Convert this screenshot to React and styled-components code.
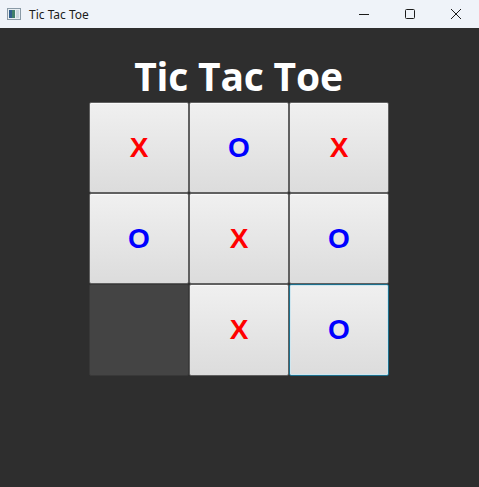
import React from 'react'
import styled, { createGlobalStyle } from 'styled-components'

const GlobalStyle = createGlobalStyle`
  html, body {
    margin: 0;
    padding: 0;
    background: #2e2e2e;
  }
  #root {
    width: 479px;
    height: 487px;
  }
`

const Window = styled.div`
  width: 479px;
  height: 487px;
  display: flex;
  flex-direction: column;
  background: #2e2e2e;
  overflow: hidden;
`

const TitleBar = styled.div`
  height: 28px;
  flex: none;
  display: flex;
  align-items: center;
  background: #eff3f9;
  font-family: 'Noto Sans', 'Open Sans', sans-serif;
  font-size: 12px;
  color: #1b1b1b;
`

const AppIcon = styled.svg`
  margin-left: 7px;
  margin-right: 8px;
`

const TitleText = styled.span`
  flex: 1;
`

const Controls = styled.div`
  display: flex;
  height: 100%;
`

const ControlButton = styled.div`
  width: 46px;
  height: 100%;
  display: flex;
  align-items: center;
  justify-content: center;
`

const Content = styled.div`
  flex: 1;
  display: flex;
  flex-direction: column;
  align-items: center;
`

const Heading = styled.h1`
  margin: 22px 0 0 -2px;
  height: 52px;
  line-height: 52px;
  font-family: 'Open Sans', 'Noto Sans', sans-serif;
  font-weight: 700;
  font-size: 39px;
  letter-spacing: -0.2px;
  color: #ffffff;
`

const Board = styled.div`
  display: grid;
  margin-right: 1px;
  grid-template-columns: repeat(3, 100px);
  grid-template-rows: 91px 91px 92px;
`

const Cell = styled.div`
  box-sizing: border-box;
  display: flex;
  align-items: center;
  justify-content: center;
  border-radius: 2px;
  font-family: 'Liberation Sans', Arial, sans-serif;
  font-weight: 700;
  font-size: 28px;
  color: ${p => (p.$mark === 'X' ? '#ff0000' : '#0000ff')};
  border: 1px solid ${p => (p.$focused ? '#1d6f8c' : '#606060')};
  background: ${p =>
    p.$mark ? 'linear-gradient(#f0f0f0, #dcdcdc)' : '#444444'};
  box-shadow: ${p =>
    p.$focused
      ? 'inset 0 0 0 1px #cfe6ef'
      : p.$mark
      ? 'inset 0 1px 0 #fafafa'
      : 'none'};
  ${p => !p.$mark && 'border-color: #383838;'}
`

const cells = ['X', 'O', 'X', 'O', 'X', 'O', '', 'X', 'O']

const App = () => {
  return (
    <Window>
      <GlobalStyle />
      <TitleBar>
        <AppIcon width='14' height='12' viewBox='0 0 14 12'>
          <rect x='0.5' y='0.5' width='13' height='11' fill='#e8eef2' stroke='#8a9aa6' />
          <rect x='2' y='2' width='6' height='8' fill='#3f7f6a' />
          <rect x='2' y='2' width='3' height='8' fill='#2f5e8c' />
          <rect x='9' y='2' width='3' height='8' fill='#c9d6de' />
        </AppIcon>
        <TitleText>Tic Tac Toe</TitleText>
        <Controls>
          <ControlButton>
            <svg width='10' height='10' viewBox='0 0 10 10'>
              <line x1='0' y1='5.5' x2='10' y2='5.5' stroke='#1b1b1b' strokeWidth='1' />
            </svg>
          </ControlButton>
          <ControlButton>
            <svg width='10' height='10' viewBox='0 0 10 10'>
              <rect x='0.5' y='0.5' width='9' height='9' rx='1' fill='none' stroke='#1b1b1b' strokeWidth='1' />
            </svg>
          </ControlButton>
          <ControlButton>
            <svg width='10' height='10' viewBox='0 0 10 10'>
              <path d='M0 0 L10 10 M10 0 L0 10' stroke='#1b1b1b' strokeWidth='1' />
            </svg>
          </ControlButton>
        </Controls>
      </TitleBar>
      <Content>
        <Heading>Tic Tac Toe</Heading>
        <Board>
          {cells.map((mark, i) => (
            <Cell key={i} $mark={mark} $focused={i === 8}>
              {mark}
            </Cell>
          ))}
        </Board>
      </Content>
    </Window>
  )
}

export default App
